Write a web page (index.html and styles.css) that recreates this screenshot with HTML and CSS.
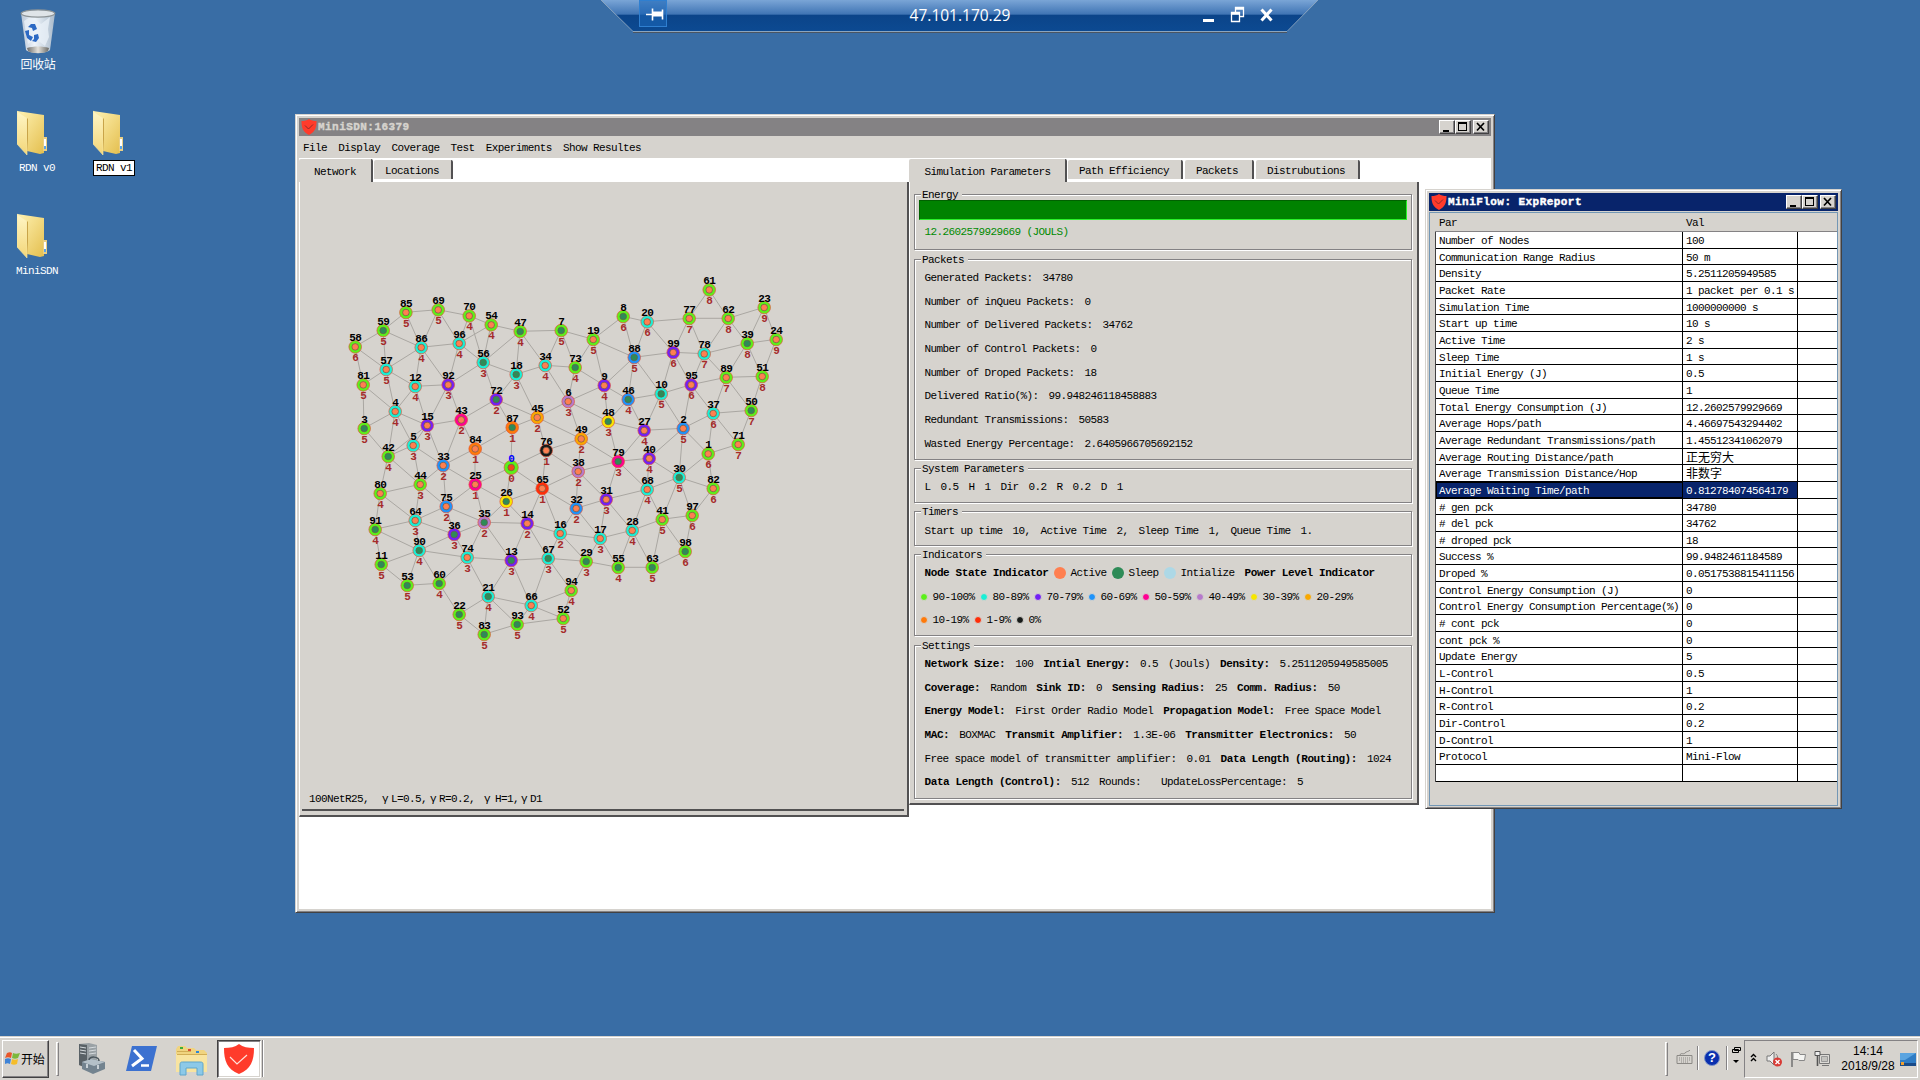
FILE: index.html
```html
<!DOCTYPE html>
<html lang="zh">
<head>
<meta charset="utf-8">
<title>47.101.170.29</title>
<link rel="stylesheet" href="styles.css">
</head>
<body>
<svg class="defs" width="0" height="0">
  <defs>
    <linearGradient id="fold" x1="0" y1="0" x2="1" y2="1"><stop offset="0" stop-color="#fff3b4"/><stop offset="1" stop-color="#e3bd4b"/></linearGradient>
    <linearGradient id="fold2" x1="0" y1="0" x2="0" y2="1"><stop offset="0" stop-color="#fff6c6"/><stop offset="1" stop-color="#f3d678"/></linearGradient>
    <linearGradient id="glass" x1="0" y1="0" x2="1" y2="0"><stop offset="0" stop-color="#b9c6d6"/><stop offset=".4" stop-color="#eef4fa"/><stop offset="1" stop-color="#a9bacb"/></linearGradient>
    <linearGradient id="metal" x1="0" y1="0" x2="1" y2="0"><stop offset="0" stop-color="#6e6e6c"/><stop offset=".5" stop-color="#e2e0da"/><stop offset="1" stop-color="#6a6a66"/></linearGradient>
    <linearGradient id="bar" x1="0" y1="0" x2="0" y2="1"><stop offset="0" stop-color="#7aa5d6"/><stop offset=".45" stop-color="#3f74b4"/><stop offset=".46" stop-color="#0b4489"/><stop offset="1" stop-color="#0c4a92"/></linearGradient>
    <symbol id="folder" viewBox="0 0 30 46">
      <path d="M0 1l27 4v22l2 1v12l-2 1v2l-4 1-13-3z" fill="url(#fold)"/>
      <path d="M0 1l10 7v37L0 34z" fill="url(#fold2)" stroke="#f7e7a4" stroke-width=".6"/>
      <path d="M10 8v37l1-16V9z" fill="#c9a449"/>
      <path d="M26 27h4v14h-4z" fill="#e9cf86"/><rect x="27" y="29" width="2" height="7" fill="#fff"/><rect x="27" y="36" width="2" height="3" fill="#58a4ea"/>
    </symbol>
    <symbol id="shield" viewBox="0 0 32 32">
      <path d="M16 1c4 3 9 4 15 4 0 13-3 21-15 26C4 26 1 18 1 5c6 0 11-1 15-4z" fill="#ff3b2b"/>
      <path d="M7 14l7 7 10-9" fill="none" stroke="#ffe3dc" stroke-width="1.200"/>
    </symbol>
    <symbol id="shield-dark" viewBox="0 0 32 32">
      <path d="M16 0c4 3 9 4 15 4 0 14-3 22-15 28C4 26 1 18 1 4c6 0 11-1 15-4z" fill="#ff3b2b"/>
      <path d="M8 13l7 7 9-9" fill="none" stroke="#7c2a2a" stroke-width="1.800"/>
    </symbol>
    <symbol id="b-min" viewBox="0 0 16 14"><path d="M4 10h6v2H4z"/></symbol>
    <symbol id="b-max" viewBox="0 0 16 14"><path d="M3 2h9v9H3zM4 4v6h7V4z" fill-rule="evenodd"/></symbol>
    <symbol id="b-close" viewBox="0 0 16 14"><path d="M4 3l7 7.500M11 3l-7 7.500" stroke="#000" stroke-width="1.700"/></symbol>
  </defs>
</svg>

<div class="desktop">
  <div class="shortcut bin">
    <svg width="36" height="45" viewBox="0 0 36 45">
      <path d="M1 4h34l-5 37c-4 4-20 4-24 0z" fill="url(#glass)"/>
      <path d="M4 12l8-5 9 8 9-7-2 12 1 8-4 9-9-7-8 5-2-11z" fill="#e9f0f7" opacity=".8"/>
      <path d="M7 39c6-2 16-2 22 0l-1 3c-4 3-16 3-20 0z" fill="url(#metal)"/>
      <ellipse cx="18" cy="4.500" rx="16.800" ry="3.600" fill="#dfe4e8" stroke="#8c9396" stroke-width="1.300"/>
      <path d="M8 18l3-3h4l2 5-4 2-1-3zM5 22l4-1v5l4 2-2 4-4-3zM14 26l4-1 1 4-3 4-4-1 2-2z" fill="#2c69c4"/>
    </svg>
    <span>回收站</span>
  </div>
  <div class="shortcut rdn0"><svg width="30" height="46"><use href="#folder"/></svg><span>RDN v0</span></div>
  <div class="shortcut rdn1"><svg width="30" height="46"><use href="#folder"/></svg><span class="renaming">RDN v1</span></div>
  <div class="shortcut sdn"><svg width="30" height="46"><use href="#folder"/></svg><span>MiniSDN</span></div>

  <header class="rdp">
    <svg class="rdp-shape" width="718" height="34" viewBox="0 0 718 34">
      <path d="M0 0h717l-31 32H32z" fill="url(#bar)"/>
      <path d="M0 0l32 31.500h654L717 0" fill="none" stroke="#8ba5bf"/>
      <path d="M32 32.500h654" stroke="#4b5561"/>
      <rect x="38.500" y=".5" width="27" height="26" fill="#1b66b8" fill-opacity=".6" stroke="#2f7fd0"/>
      <path d="M45 14.500h6M51.500 8.500v12M61.500 9.500v10" stroke="#fff" stroke-width="1.600"/><path d="M52 11.500h9v5h-9z" fill="#fff"/>
      <path d="M602 19h11v3h-11z" fill="#fff"/>
      <path d="M630.500 12.500h8v9h-8zM630 14h9M634.500 12V7.500h8v9h-4M634 9h9" fill="none" stroke="#fff" stroke-width="1.300"/>
      <path d="M660.500 9.500l10 11M670.500 9.500l-10 11" stroke="#fff" stroke-width="3"/>
    </svg>
    <span class="rdp-host">47.101.170.29</span>
  </header>

  <section class="window main-window">
    <div class="titlebar inactive">
      <svg width="16" height="16"><use href="#shield-dark"/></svg><b>MiniSDN:16379</b>
      <i class="btn"><svg width="16" height="14"><use href="#b-min"/></svg></i><i class="btn"><svg width="16" height="14"><use href="#b-max"/></svg></i><i class="btn close"><svg width="16" height="14"><use href="#b-close"/></svg></i>
    </div>
    <nav class="menu"><span>File</span><span>Display</span><span>Coverage</span><span>Test</span><span>Experiments</span><span>Show Resultes</span></nav>
    <div class="workspace">
      <div class="left-pane">
        <div class="tabs"><span class="tab on t-net">Network</span><span class="tab t-loc">Locations</span></div>
        <div class="canvas">
          <svg id="graph" width="606" height="600" viewBox="301 182 606 600"></svg>
          <div class="status"><span class="s-name">100NetR25,</span><i>γ</i><span class="s-l">L=0.5,</span><i>γ</i><span class="s-r">R=0.2,</span><i>γ</i><span class="s-h">H=1,</span><i>γ</i><span>D1</span></div>
        </div>
      </div>
      <div class="right-pane">
        <div class="tabs"><span class="tab on t-sim">Simulation Parameters</span><span class="tab t-path">Path Efficiency</span><span class="tab t-pack">Packets</span><span class="tab t-dist">Distrubutions</span></div>
        <div class="params">
          <div class="group g-energy"><h2>Energy</h2><div class="bar"></div><p class="joules"><span>12.2602579929669 (JOULS)</span></p></div>
          <div class="group g-packets"><h2>Packets</h2>
            <p><span>Generated Packets:</span><span>34780</span></p>
            <p><span>Number of inQueu Packets:</span><span>0</span></p>
            <p><span>Number of Delivered Packets:</span><span>34762</span></p>
            <p><span>Number of Control Packets:</span><span>0</span></p>
            <p><span>Number of Droped Packets:</span><span>18</span></p>
            <p><span>Delivered Ratio(%):</span><span>99.948246118458883</span></p>
            <p><span>Redundant Transmissions:</span><span>50583</span></p>
            <p><span>Wasted Energy Percentage:</span><span>2.6405966705692152</span></p>
          </div>
          <div class="group g-system"><h2>System Parameters</h2>
            <p><span>L</span><span>0.5</span><span>H</span><span>1</span><span>Dir</span><span>0.2</span><span>R</span><span>0.2</span><span>D</span><span>1</span></p>
          </div>
          <div class="group g-timers"><h2>Timers</h2>
            <p><span>Start up time</span><span>10,</span><span>Active Time</span><span>2,</span><span>Sleep Time</span><span>1,</span><span>Queue Time</span><span>1.</span></p>
          </div>
          <div class="group g-ind"><h2>Indicators</h2>
            <p><b>Node State Indicator</b><i class="dot big active"></i><span>Active</span><i class="dot big sleep"></i><span>Sleep</span><i class="dot big init"></i><span>Intialize</span><b>Power Level Indicator</b></p>
            <p><i class="dot p90"></i><span>90-100%</span><i class="dot p80"></i><span>80-89%</span><i class="dot p70"></i><span>70-79%</span><i class="dot p60"></i><span>60-69%</span><i class="dot p50"></i><span>50-59%</span><i class="dot p40"></i><span>40-49%</span><i class="dot p30"></i><span>30-39%</span><i class="dot p20"></i><span>20-29%</span></p>
            <p><i class="dot p10"></i><span>10-19%</span><i class="dot p1"></i><span>1-9%</span><i class="dot p0"></i><span>0%</span></p>
          </div>
          <div class="group g-set"><h2>Settings</h2>
            <p><b>Network Size:</b><span>100</span><b>Intial Energy:</b><span>0.5</span><span>(Jouls)</span><b>Density:</b><span>5.2511205949585005</span></p>
            <p><b>Coverage:</b><span>Random</span><b>Sink ID:</b><span>0</span><b>Sensing Radius:</b><span>25</span><b>Comm. Radius:</b><span>50</span></p>
            <p><b>Energy Model:</b><span>First Order Radio Model</span><b>Propagation Model:</b><span>Free Space Model</span></p>
            <p><b>MAC:</b><span>BOXMAC</span><b>Transmit Amplifier:</b><span>1.3E-06</span><b>Transmitter Electronics:</b><span>50</span></p>
            <p><span>Free space model of transmitter amplifier:</span><span>0.01</span><b>Data Length (Routing):</b><span>1024</span></p>
            <p><b>Data Length (Control):</b><span>512</span><span>Rounds:</span><span></span><span>UpdateLossPercentage:</span><span>5</span></p>
          </div>
        </div>
      </div>
    </div>
  </section>

  <section class="window report-window">
    <div class="titlebar">
      <svg width="16" height="16"><use href="#shield-dark"/></svg><b>MiniFlow: ExpReport</b>
      <i class="btn"><svg width="16" height="14"><use href="#b-min"/></svg></i><i class="btn"><svg width="16" height="14"><use href="#b-max"/></svg></i><i class="btn close"><svg width="16" height="14"><use href="#b-close"/></svg></i>
    </div>
    <div class="report">
      <div class="thead"><span>Par</span><span>Val</span></div>
      <div class="grid">
        <div><span>Number of Nodes</span><span>100</span></div>
        <div><span>Communication Range Radius</span><span>50 m</span></div>
        <div><span>Density</span><span>5.2511205949585</span></div>
        <div><span>Packet Rate</span><span>1 packet per 0.1 s</span></div>
        <div><span>Simulation Time</span><span>1000000000 s</span></div>
        <div><span>Start up time</span><span>10 s</span></div>
        <div><span>Active Time</span><span>2 s</span></div>
        <div><span>Sleep Time</span><span>1 s</span></div>
        <div><span>Initial Energy (J)</span><span>0.5</span></div>
        <div><span>Queue Time</span><span>1</span></div>
        <div><span>Total Energy Consumption (J)</span><span>12.2602579929669</span></div>
        <div><span>Average Hops/path</span><span>4.46697543294402</span></div>
        <div><span>Average Redundant Transmissions/path</span><span>1.45512341062079</span></div>
        <div><span>Average Routing Distance/path</span><span class="cjk">正无穷大</span></div>
        <div><span>Average Transmission Distance/Hop</span><span class="cjk">非数字</span></div>
        <div class="sel"><span>Average Waiting Time/path</span><span>0.812784074564179</span></div>
        <div><span># gen pck</span><span>34780</span></div>
        <div><span># del pck</span><span>34762</span></div>
        <div><span># droped pck</span><span>18</span></div>
        <div><span>Success %</span><span>99.9482461184589</span></div>
        <div><span>Droped %</span><span>0.0517538815411156</span></div>
        <div><span>Control Energy Consumption (J)</span><span>0</span></div>
        <div><span>Control Energy Consumption Percentage(%)</span><span>0</span></div>
        <div><span># cont pck</span><span>0</span></div>
        <div><span>cont pck %</span><span>0</span></div>
        <div><span>Update Energy</span><span>5</span></div>
        <div><span>L-Control</span><span>0.5</span></div>
        <div><span>H-Control</span><span>1</span></div>
        <div><span>R-Control</span><span>0.2</span></div>
        <div><span>Dir-Control</span><span>0.2</span></div>
        <div><span>D-Control</span><span>1</span></div>
        <div><span>Protocol</span><span>Mini-Flow</span></div>
        <div><span></span><span></span></div>
      </div>
    </div>
  </section>
</div>

<footer class="taskbar">
  <button class="start">
    <svg width="16" height="15" viewBox="0 0 16 15"><path d="M2 2c2-1 4-1 5 0L6 7c-2-1-4-1-6 0z" fill="#e8562a"/><path d="M8 2c2 1 4 1 7 0l-2 5c-2 1-4 1-6 0z" fill="#7cb83a"/><path d="M0 8c2-1 4-1 6 0l-1 5c-2-1-3-1-5 0z" fill="#3f83d6"/><path d="M7 8c2 1 4 1 6 0l-1 5c-2 1-4 1-6 0z" fill="#f5bd2a"/></svg>
    <span>开始</span>
  </button>
  <i class="sep first"></i>
  <svg class="ti-server" width="28" height="32" viewBox="0 0 28 32">
    <path d="M1 1l10-1 8 2v21l-7 4L1 22z" fill="#9aa1a5"/><path d="M1 1l8 1v23l-8-3z" fill="#596166"/><path d="M2 4l6 1M2 7l6 1M2 10l6 1M11 5l7-1M11 8l7-1M11 11l7-1" stroke="#d5dadd"/>
    <path d="M4 19l9-3 14 3v7l-12 5-11-5z" fill="#73838f"/><path d="M4 19l9-3 14 3-11 4z" fill="#b4c0c8"/><path d="M11 17c0-4 10-4 10 1" fill="none" stroke="#4a555c" stroke-width="1.500"/><path d="M9 21v4M20 22v4" stroke="#e5eaee" stroke-width="1.500"/>
  </svg>
  <svg class="ti-ps" width="32" height="25" viewBox="0 0 32 25"><path d="M6 0h25l-6 25H0z" fill="#3c71d0"/><path d="M8 4l8 8.500L6 20" fill="none" stroke="#fff" stroke-width="3"/><path d="M15 19.500h8" stroke="#fff" stroke-width="2.500"/></svg>
  <svg class="ti-exp" width="33" height="30" viewBox="0 0 33 30">
    <path d="M1 3l2-3h7l2 2h7l2 2h8l3 3v19H1z" fill="#f0d480"/><path d="M1 8h31v18H1z" fill="#f8e4a0"/><path d="M2 5.500h14M2 8.500h30" stroke="#d2ad55"/>
    <path d="M5 1h3v2H5z" fill="#3cae3c"/><path d="M13 3h3v2h-3z" fill="#d94c35"/><path d="M21 5h3v2h-3z" fill="#2c86d8"/>
    <path d="M5 29V19c0-3 1-3 3-3h17c3 0 3 1 3 3v10h-6v-7H11v7z" fill="#8cc9e8" stroke="#5fa6cc"/>
  </svg>
  <div class="task-active"><svg width="32" height="32"><use href="#shield"/></svg></div>
  <i class="sep-thin task-edge"></i>
  <div class="tray-left">
    <i class="sep"></i>
    <svg class="kbd" width="17" height="15" viewBox="0 0 17 15"><path d="M1 5.500h15v8H1zM4 5c1-3 3 0 5-2s3-1 5-3" fill="none" stroke="#8b8985"/><path d="M3 8h11M3 10h11M5 12h7" stroke="#8b8985" stroke-dasharray="1 1"/></svg>
    <i class="sep-thin"></i>
    <span class="help">?</span>
    <i class="sep-thin"></i>
    <svg class="lang" width="9" height="18" viewBox="0 0 9 18"><path d="M2.500.5h6v3h-6zM.5 2.500h6v3h-6z" fill="#d6d3ce" stroke="#000"/><path d="M1 13h6l-3 3z"/></svg>
  </div>
  <div class="tray">
    <svg class="t-chev" width="7" height="9" viewBox="0 0 7 9"><path d="M1 4l2.500-2.500L6 4M1 8l2.500-2.500L6 8" fill="none" stroke="#000" stroke-width="1.400"/></svg>
    <svg width="17" height="16" viewBox="0 0 17 16"><path d="M1 5h3l4-4v13l-4-4H1z" fill="#eee" stroke="#777"/><path d="M10 3c2 2 2 4 1 6" fill="none" stroke="#888"/><circle cx="11.500" cy="11" r="4.500" fill="#d83a34"/><path d="M9.500 9l4 4M13.500 9l-4 4" stroke="#fff" stroke-width="1.400"/></svg>
    <svg width="17" height="16" viewBox="0 0 17 16"><path d="M2 1v15" stroke="#777" stroke-width="1.600"/><path d="M3 1.500h6l1 2h5.500l-1 6H9l-1-1H3z" fill="#f4f4f2" stroke="#888"/></svg>
    <svg width="17" height="16" viewBox="0 0 17 16"><path d="M5.500 3.500h10v9h-10z" fill="#dcdad6" stroke="#777"/><path d="M7.500 5.500h6v5h-6z" fill="#c4c3bf" stroke="#999"/><path d="M8 14.500h7" stroke="#777"/><path d="M1 .5h5v4H1z" fill="#eee" stroke="#555"/><path d="M3.500 5v10" stroke="#555" stroke-width="1.600"/></svg>
    <div class="clock"><span>14:14</span><span>2018/9/28</span></div>
    <svg class="t-desk" width="16" height="13" viewBox="0 0 16 13"><path d="M0 0h16v12H0z" fill="#2f7cc4"/><path d="M0 0h16L5 7H0z" fill="#5aa4e0"/><path d="M0 10h16v3H0z" fill="#184a88"/><path d="M1 9h3v3H1z" fill="#f0a030"/></svg>
  </div>
</footer>
<script src="graph.js"></script>
</body>
</html>
```
FILE: styles.css
```css
* { box-sizing: border-box; }
html, body { margin: 0; height: 100%; }
body {
  width: 1920px; height: 1080px; overflow: hidden;
  display: flex; flex-direction: column;
  background: #396da5; color: #000;
  font: 11px/14px "Liberation Mono", "Noto Sans CJK SC", monospace;
  letter-spacing: -0.6px;
}
b { letter-spacing: -0.4px; }
i { font-style: normal; }
svg { display: block; flex: none; }
.defs { position: absolute; }
.desktop { position: relative; flex: none; height: 1036px; }

/* desktop shortcuts */
.shortcut { position: absolute; width: 76px; display: flex; flex-direction: column; color: #fff; }
.shortcut span { align-self: center; white-space: nowrap; }
.bin { left: 0; top: 9px; }
.bin svg { margin-left: 20px; }
.bin span { font: 12px/19px "Noto Sans CJK SC", sans-serif; letter-spacing: -0.3px; }
.rdn0 { left: 0; top: 110px; }
.rdn1 { left: 76px; top: 110px; }
.sdn { left: 0; top: 213px; }
.rdn0 svg, .rdn1 svg, .sdn svg { margin: 0 0 4px 17px; }
.rdn0 span, .sdn span { margin: 1px 2px 0 0; }
.shortcut .renaming { border: 1px solid #000; background: #fff; color: #000; line-height: 14px; padding: 0 2px; }

/* remote desktop connection bar */
.rdp { position: absolute; left: 601px; top: 0; width: 718px; height: 34px; display: grid; }
.rdp > * { grid-area: 1 / 1; }
.rdp-host { justify-self: center; margin: 4px 0 0 0; color: #fff; font: 15.5px/23px "Open Sans", sans-serif; letter-spacing: 0; }

/* windows */
.window {
  position: absolute; background: #d6d3ce; padding: 2px;
  border: 1px solid; border-color: #d6d3ce #424142 #424142 #d6d3ce;
  box-shadow: inset 1px 1px 0 #fff, inset -1px -1px 0 #848284;
  display: flex; flex-direction: column;
}
.titlebar { display: flex; align-items: center; height: 18px; flex: none; background: #08246b; color: #fff; padding: 0 2px; margin: 1px 1px 0; }
.titlebar b { flex: 1; padding-left: 1px; font-size: 11px; letter-spacing: .45px; -webkit-text-stroke: .4px; }
.inactive { background: #848284; color: #d6d3ce; }
.btn { width: 16px; height: 14px; background: #d6d3ce; border: 1px solid; border-color: #fff #424142 #424142 #fff; box-shadow: inset -1px -1px 0 #848284; }
.btn svg { margin: -1px; }
.btn.close { margin-left: 2px; }

.main-window { left: 295px; top: 114px; width: 1200px; height: 799px; }
.menu { display: flex; gap: 11.2px; height: 22px; flex: none; padding-left: 5px; line-height: 25px; }
.workspace { flex: 1; display: flex; align-items: flex-start; background: #fff; margin: 0 1px 1px; }
.left-pane { width: 610px; }
.right-pane { width: 510px; }
.tabs { display: flex; align-items: flex-end; height: 24px; background: #fff; }
.tab { height: 19px; margin-bottom: 3px; margin-right: 2px; background: #d6d3ce; border-right: 2px solid #525152; line-height: 22px; padding-left: 11px; border-radius: 2px 2px 0 0; }
.tab.on { height: 23px; margin-bottom: 0; margin-right: 1px; line-height: 27px; padding-left: 15px; }
.t-net { width: 74px; }
.t-loc { width: 79px; }
.t-sim { width: 158px; }
.right-pane .tab.on { padding-left: 15.5px; }
.t-path { width: 115px; }
.t-pack { width: 69px; }
.t-dist { width: 104px; }
.canvas { height: 635px; background: #d6d3ce; border-right: 2px solid #525152; border-bottom: 2px solid #525152; border-left: 1px solid #fff; }
.canvas > svg { margin-left: 1px; }
#graph text { font: bold 11px "Liberation Mono", monospace; letter-spacing: -0.6px; text-anchor: middle; }
.status { display: flex; height: 29px; margin: 0 3px 0 2px; padding: 10px 0 0 7px; line-height: 15px; border-bottom: 2px solid #525152; }
.status i { width: 9px; }
.s-name { width: 73px; }
.s-l { width: 39px; }
.s-r { width: 45px; }
.s-h { width: 28px; padding-left: 2px; }

/* parameter groups */
.params { height: 623px; background: #d6d3ce; padding: 12px 5px 0 4px; border-right: 2px solid #525152; border-bottom: 2px solid #525152; border-left: 1px solid #fff; }
.group { width: 498px; border: 1px solid #848284; box-shadow: 1px 1px 0 #fff, inset 1px 1px 0 #fff; margin-bottom: 9px; }
.group h2 { width: max-content; height: 13px; line-height: 14px; margin: -7px 0 0 6px; padding: 0 4px 0 1px; background: #d6d3ce; font-size: 11px; font-weight: normal; }
.group p { display: flex; align-items: center; margin: 0; padding-left: 4.5px; height: 23.7px; white-space: pre; }
.group p span, .group p b { padding: 0 5px; }
.g-energy { height: 56px; }
.bar { height: 20px; margin: -1px 4px 0; background: #008200; border: 1px solid; border-color: #006100 #29f229 #29f229 #006100; }
.group .joules { color: #008a00; }
.g-packets { height: 201px; margin-bottom: 8px; }
.g-system { height: 35px; margin-bottom: 8px; }
.g-timers { height: 35px; margin-bottom: 8px; }
.g-timers p { padding-top: 3px; }
.g-ind { height: 82px; }
.g-set { height: 154px; margin: 0; }
.group .dot { width: 8px; height: 8px; border-radius: 50%; flex: none; }
.group .dot:not(.big) { border: .5px solid #d6d3ce; }
.group .dot.big { width: 12px; height: 12px; }
.active { background: #ff7f50; } .sleep { background: #2e8b57; } .init { background: #add8e6; }
.p90 { background: #5cf01a; } .p80 { background: #1aefd6; } .p70 { background: #7320f5; } .p60 { background: #1e93fa; }
.p50 { background: #ff0093; } .p40 { background: #b67acb; } .p30 { background: #f7e600; } .p20 { background: #f9a800; }
.p10 { background: #ff7a0a; } .p1 { background: #ff2d08; } .p0 { background: #171a18; }

/* report window */
.report-window { left: 1425px; top: 189px; width: 417px; height: 620px; }
.report { flex: 1; display: flex; flex-direction: column; margin: 1px 1px 0; border: 1px solid #7397b5; padding-left: 5px; }
.thead { display: grid; grid-template-columns: 247px 1fr; height: 19px; line-height: 21px; padding-left: 4px; border-bottom: 1px solid #848284; }
.grid { display: grid; grid-auto-rows: 16.67px; background: #fff; border-left: 1px solid #424142; }
.grid > div { display: grid; grid-template-columns: 247px 115px 1fr; border-bottom: 1px solid #000; line-height: 18px; white-space: nowrap; }
.grid span { height: 15.67px; padding-left: 3px; border-right: 1px solid #000; }
.grid .cjk { font: 12px/16px "Noto Sans CJK SC", sans-serif; letter-spacing: 0; }
.grid .sel span { background: #08246b; color: #fff; }
.grid .sel span:first-child { outline: 1px solid #000; outline-offset: -1px; }

/* taskbar */
.taskbar { flex: none; display: flex; align-items: flex-start; height: 44px; background: #d6d3ce; border-top: 1px solid #d6d3ce; box-shadow: inset 0 1px 0 #fff; padding: 3px 2px 0 2px; }
.start { display: flex; align-items: center; gap: 0; width: 47px; height: 38px; padding: 0 0 1px 2px; background: #d6d3ce; border: 1px solid; border-color: #fff #424142 #424142 #fff; box-shadow: inset -1px -1px 0 #848284; font: 12px/18px "Noto Sans CJK SC", sans-serif; letter-spacing: -0.3px; color: #000; white-space: nowrap; }
.sep { width: 3px; height: 34px; margin-top: 2px; border: 1px solid; border-color: #fff #848284 #848284 #fff; }
.sep.first { margin-left: 7px; }
.sep-thin { width: 2px; height: 24px; border-left: 1px solid #848284; border-right: 1px solid #fff; }
.ti-server { margin: 3px 0 0 19px; }
.ti-ps { margin: 6px 0 0 20px; }
.ti-exp { margin: 6px 0 0 17px; }
.task-active { width: 44px; height: 38px; margin-left: 9px; padding: 2px 5px; background: #fff; border: 1px solid; border-color: #424142 #fff #fff #424142; box-shadow: inset 1px 1px 0 #848284, inset -1px -1px 0 #d6d3ce; }
.task-edge { height: 37px; margin-left: 1px; }
.tray-left { display: flex; align-items: center; height: 35px; margin-left: auto; }
.tray-left .sep { margin-top: 3px; }
.kbd { margin: 0 4px 0 8px; }
.help { width: 16px; height: 16px; margin: 0 6px 0 5px; border-radius: 50%; background: #0a2fae; border: 1px solid #7c92c8; color: #fff; font: bold 13px/14px "Liberation Sans", sans-serif; text-align: center; letter-spacing: 0; }
.lang { margin: 0 3px 3px 4px; }
.tray { display: flex; align-items: center; gap: 7px; width: 174px; height: 38px; padding: 0 1px 0 5px; border: 1px solid; border-color: #848284 #fff #fff #848284; }
.t-chev { margin: -3px 2px 0 0; }
.clock { display: flex; flex-direction: column; align-items: center; width: 58px; margin-left: 1px; font: 12px/15px "Liberation Sans", sans-serif; letter-spacing: 0; }
.t-desk { margin-left: -4px; }
```
FILE: graph.js
```js
// id, x, y, hops to sink, power level, state (a = active, s = sleep)
const nodes = `85 405.7 312.3 5 L a|69 438 309.7 5 L a|70 469 315.7 4 L a|54 491 324.7 4 L a|47 520 331.3 4 L s
59 383 330.3 5 L s|58 355 346.7 6 L a|86 421 347.3 4 C a|96 459 343.3 4 C a|56 483 362.3 3 C s|57 386 369.3 5 C a
18 516 374.3 3 C s|34 545 365.3 4 C a|81 363 384.7 5 L a|12 415 386.3 4 C a|92 448 384.7 3 P a|72 496 399.3 2 P s
4 395 411.3 4 C a|43 461 419.7 2 K a|45 537 417.3 2 A a|3 364 428.3 5 L s|15 427 425.3 3 P a|87 512 427.3 1 O s
84 475 448.7 1 O a|5 413 445.3 3 C a|76 546 450.3 1 X a|42 388 456.3 4 L s|33 443 465.3 2 B a|0 511 467.3 0 L r
61 709 289.7 8 L a|23 764 307.3 9 L a|77 689 318.3 7 L a|62 728 318.3 8 L a|8 623 316.3 6 L s|20 647 321.7 6 C a
7 561 330.3 5 L s|19 593 339.3 5 L a|24 776 339.3 9 L a|39 747 343.3 8 L s|99 673 352.3 6 P a|78 704 353.7 7 C a
88 634 357.3 5 B s|73 575 367.3 4 L s|89 726 377.3 7 L a|51 762 376.3 8 L a|95 691 384.7 6 P a|9 604 385.3 4 P a
10 661 393.7 5 C s|46 628 399.3 4 B s|6 568 401.3 3 M a|37 713 413.3 6 C a|50 751 410.3 7 L s|48 608 421.3 3 Y s
2 683 428.3 5 B a|27 644 430.3 4 P a|49 581 438.7 2 A a|71 738 444.3 7 L a|40 649 458.3 4 P a|1 708 453.7 6 L a
79 618 461.3 3 K s|38 578 471.3 2 M a|44 420 484.3 3 L a|25 475 484.3 1 K a|65 542 488.3 1 R a|80 380 493.3 4 L a
26 506 501.3 1 Y s|75 446 506.3 2 B a|64 415 520.3 3 C a|35 484 522.3 2 M s|14 527 523.3 2 P a|91 375 529.3 4 L s
36 454 534.3 3 P s|90 419 550.3 4 C s|74 467 557.3 3 C a|13 511 560.3 3 P s|67 548 558.3 3 C s|11 381 564.3 5 L s
53 407 585.3 5 L s|60 439 583.3 4 L s|21 488 596.3 4 C s|66 531 605.3 4 C a|22 459 614.3 5 L s|93 517 624.3 5 L s
83 484 634.3 5 L s|30 679 477.3 5 C s|82 713 488.3 6 L a|68 647 489.3 4 C a|31 606 499.3 3 P a|32 576 508.3 2 B a
97 692 515.3 6 L a|41 662 519.3 5 L a|16 560 533.3 2 C a|28 632 530.3 4 C a|17 600 538.3 3 C a|98 685 551.3 6 L s
29 586 561.3 3 L s|55 618 567.3 4 L s|63 652 567.3 5 L s|94 571 590.3 4 L a|52 563 618.3 5 L a`
  .split(/[|\n]/).map(r => r.trim().split(' '));

// adjacency: node: neighbours
const links = `85:59,69,86 69:86,70,96 70:54,96,56 54:96,47,56 59:58,57,86 58:81,57 86:57,96,12,92 96:56,92
56:47,18,92,72 47:7,18,34 18:34,72,45 34:7,73,6 57:81,12,4 81:3,4 12:4,92,15 92:15,43 72:43,45,87 4:3,15,5,42
15:43,5,33,42 43:33,84 87:84,45,0 45:6,49,76 3:42 42:5,44,80 5:33,44 33:84,44,75,25 84:0,25 0:76,25,65,26
76:49,38,65 61:77,62 77:20,62,99,78 62:23,39,78 23:39,24 39:24,51,89,78 24:51 8:19,20,88 20:88,99 7:19,73
19:73,88,9 88:99,9,46,10 99:78,10,95 78:89,95 95:10,89,37,2 89:51,50,37 51:50 37:50,2,1,71 50:71 1:71 73:6,9
9:6,46,48 46:10,48,27 10:27,2 6:48,49 48:27,49,79 49:79,38 27:2,79,40 79:40 2:40,1,30 40:30,68 1:30,82
38:79,65,31,32 79:31,68 68:30,31,41,28 30:82,97,41 82:97 31:32,17,28 32:65,16,17 97:41,98 41:28,63,98
28:17,55,63 98:63 63:55 55:29,17 17:16,29 16:29,67,14,65 29:67,94 67:94,66,13 94:66,52 52:66,93 65:26,14
26:25,35,14 25:75,35 44:80,75,64 75:64,35,36 64:80,91,36,90 35:36,74,14,13 14:13,67 80:91 91:90,11 36:90,74
90:11,53,60,74 74:60,13,21 13:21,66 11:53 53:60 60:22 22:21,83 21:83,93,66 66:93 83:93`;

const level = { L: '#5cf01a', C: '#1aefd6', P: '#7320f5', B: '#1e93fa', K: '#ff0093', M: '#b67acb', Y: '#f7e600', A: '#f9a800', O: '#ff7a0a', R: '#ff2d08', X: '#171a18' };
const state = { a: '#ff7f50', s: '#2e8b57', r: '#f04a18' };
const at = Object.fromEntries(nodes.map(n => [n[0], n]));

let out = '<g stroke="#aaa7a2" stroke-width="1">';
for (const entry of links.split(/\s+/)) {
  const [a, list] = entry.split(':');
  for (const b of list.split(',')) {
    out += `<path d="M${at[a][1]} ${at[a][2]}L${at[b][1]} ${at[b][2]}"/>`;
  }
}
out += '</g>';
for (const [id, x, y, hops, lvl, st] of nodes) {
  const r = id === '0' ? 7.1 : 6.3;
  const cx = +x + 0.2, cy = +y + 0.2;
  out += `<circle cx="${cx}" cy="${cy}" r="${r}" fill="${level[lvl]}" stroke="#e2553a" stroke-width=".7"/>`
    + `<circle cx="${cx}" cy="${cy}" r="3.3" fill="${state[st]}" stroke="#6d5a48" stroke-width=".7"/>`
    + `<text x="${cx}" y="${cy - 5.7}" fill="${id === '0' ? '#0000ff' : '#000'}">${id}</text>`
    + `<text x="${cx}" y="${cy + 14.3}" fill="#a52a2a">${hops}</text>`;
}
document.getElementById('graph').innerHTML = out;
```
